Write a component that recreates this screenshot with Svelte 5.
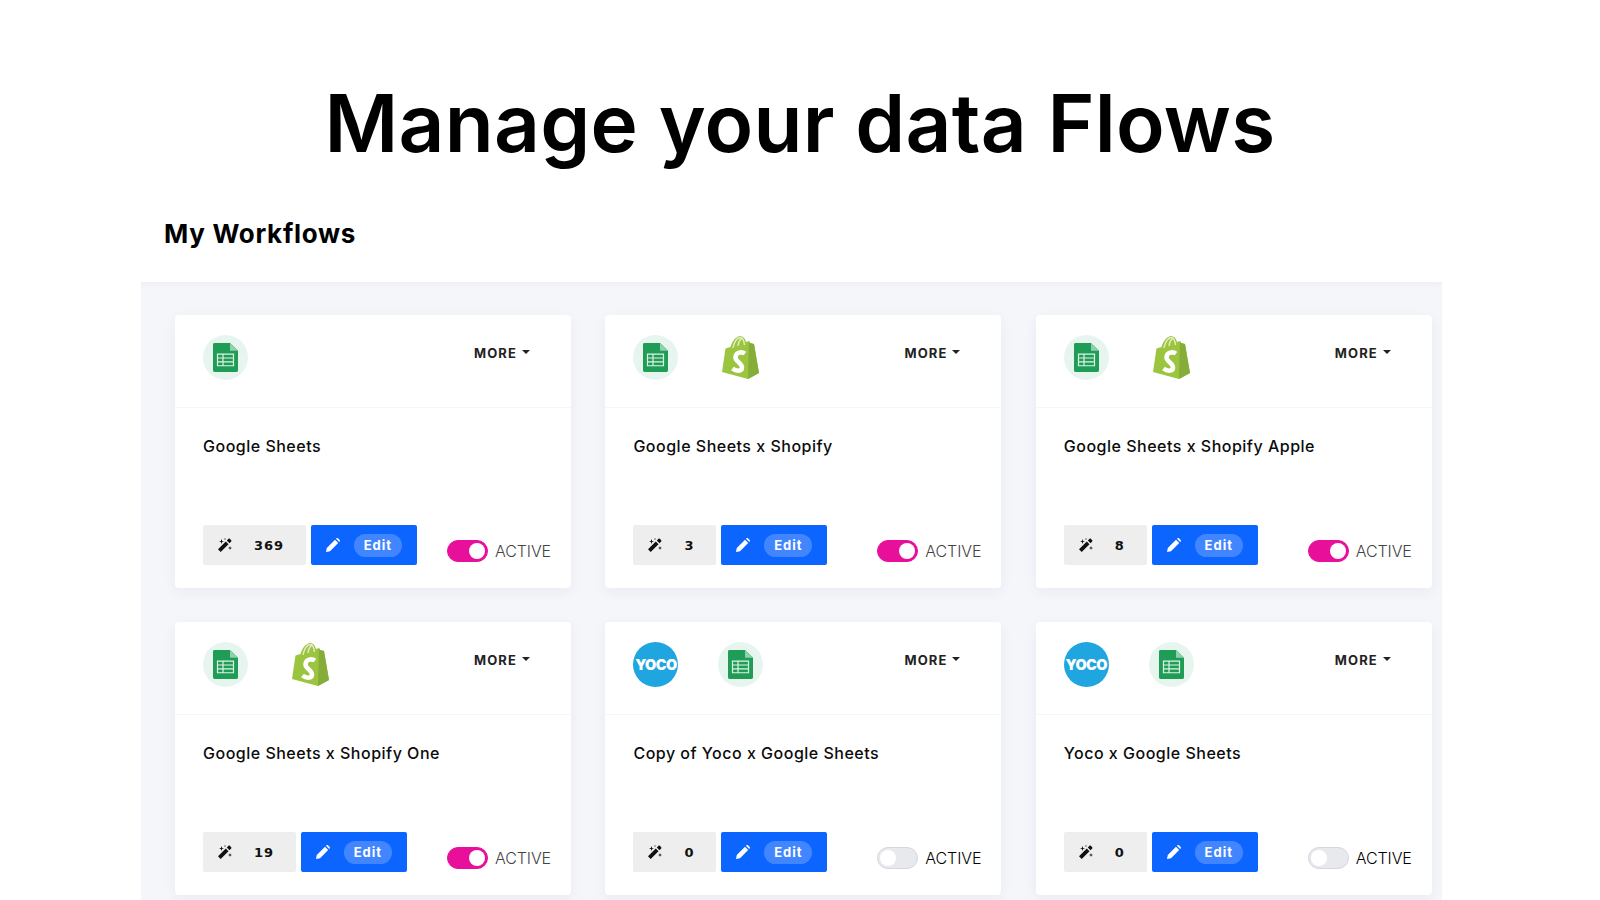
<script>
  // Workflow cards shown on the page
  const flows = [
    { name: 'Google Sheets', icons: ['sheets'], runs: 369, active: true },
    { name: 'Google Sheets x Shopify', icons: ['sheets', 'shopify'], runs: 3, active: true },
    { name: 'Google Sheets x Shopify Apple', icons: ['sheets', 'shopify'], runs: 8, active: true },
    { name: 'Google Sheets x Shopify One', icons: ['sheets', 'shopify'], runs: 19, active: true },
    { name: 'Copy of Yoco x Google Sheets', icons: ['yoco', 'sheets'], runs: 0, active: false },
    { name: 'Yoco x Google Sheets', icons: ['yoco', 'sheets'], runs: 0, active: false }
  ];
</script>

<main class="page">
  <h1 class="headline">Manage your data Flows</h1>
  <h2 class="section-title">My Workflows</h2>

  <section class="panel">
    {#each flows as flow}
      <article class="card">
        <header class="card-head">
          <div class="apps">
            {#each flow.icons as icon}
              {#if icon === 'sheets'}
                <span class="app sheets">
                  <svg width="25" height="29" viewBox="0 0 25 30" preserveAspectRatio="none">
                    <path d="M1.500 0H17L25 8V28.500A1.500 1.500 0 0 1 23.500 30H1.500A1.500 1.500 0 0 1 0 28.500V1.500A1.500 1.500 0 0 1 1.500 0Z" fill="#1f9d57" />
                    <path d="M17 0L25 8H17Z" fill="#8fd0ae" />
                    <path d="M4.500 11.500H20.500V23.500H4.500ZM4.500 15.500H20.500M4.500 19.500H20.500M10 11.500V23.500" fill="none" stroke="#dff2e7" stroke-width="1.200" />
                  </svg>
                </span>
              {:else if icon === 'shopify'}
                <span class="app">
                  <svg width="37" height="44" viewBox="0 1 37 44">
                    <path d="M27 6L24 7C23 3 21 1 18 1C13 2 10 7 8.500 12L3.500 13.500L0 37L26 44L37 38L32 9L28 8Z" fill="#9bc43f" />
                    <path d="M27 6L28 8L32 9L37 38L26 44Z" fill="#86ad3a" />
                    <path d="M11 13C12 7 15 2.500 18.500 2.500C21.500 2.500 22 7 22.500 10M16 11C16.500 7 18 4 20.500 3" fill="none" stroke="#fff" stroke-opacity="0.7" stroke-width="1.400" />
                    <path d="M23 18.500C20 16.500 13.500 17 13.500 22.500C13.500 27 20 27.500 20 32.500C20 36.500 14.500 36.500 10.500 33.500" fill="none" stroke="#fff" stroke-width="4.500" />
                  </svg>
                </span>
              {:else}
                <span class="app yoco">YOCO</span>
              {/if}
            {/each}
          </div>
          <span class="more">MORE<i class="caret"></i></span>
        </header>

        <div class="card-body">{flow.name}</div>

        <footer class="card-foot">
          <div class="count">
            <svg width="14" height="14" viewBox="0 0 14 14">
              <path d="M0 11.300L7.800 3.500L10.500 6.200L2.700 14Z M8.800 2.500L10.500 0.800C10.900 0.400 11.400 0.400 11.800 0.800L13.200 2.200C13.600 2.600 13.600 3.100 13.200 3.500L11.500 5.200Z" fill="#111" />
              <path d="M3.500 1L4.100 2.900L6 3.500L4.100 4.100L3.500 6L2.900 4.100L1 3.500L2.900 2.900ZM12 8L12.500 9.500L14 10L12.500 10.500L12 12L11.500 10.500L10 10L11.500 9.500ZM7 0L7.300 0.700L8 1L7.300 1.300L7 2L6.700 1.300L6 1L6.700 0.700Z" fill="#111" />
            </svg>
            <span class="runs">{flow.runs}</span>
          </div>
          <button type="button" class="edit">
            <svg width="14" height="14" viewBox="0 0 14 14">
              <path d="M0 14L0.800 10L9 1.800L12.200 5L4 13.200ZM10 0.800L10.600 0.300C11 0 11.500 0 11.900 0.300L13.700 2.100C14 2.500 14 3 13.700 3.400L13.200 4Z" fill="#fff" />
            </svg>
            <span class="edit-label">Edit</span>
          </button>
          <div class="status" class:on={flow.active}>
            <span class="toggle"><span class="knob"></span></span>
            <span class="status-label">ACTIVE</span>
          </div>
        </footer>
      </article>
    {/each}
  </section>
</main>

<style>
  :global(body) {
    background: #fff;
    overflow: hidden;
  }

  .page {
    height: 900px;
    overflow: hidden;
    font-family: Inter, "Liberation Sans", sans-serif;
    color: #000;
  }

  .headline {
    margin: 0;
    padding-top: 76px;
    height: 134px;
    font-size: 80px;
    line-height: 94px;
    font-weight: 600;
    letter-spacing: 0.3px;
    text-align: center;
  }

  .section-title {
    margin: 0;
    padding: 7px 0 0 164px;
    height: 65px;
    font-size: 26px;
    line-height: 34px;
    font-weight: 700;
    letter-spacing: 0.7px;
  }

  .panel {
    box-sizing: border-box;
    width: 1301px;
    height: 651px;
    margin-left: 141px;
    padding: 33px 0 0 34px;
    background: #f5f6fa;
    box-shadow: inset 0 6px 6px -4px #eeeff2;
    display: grid;
    grid-template-columns: repeat(3, 396px);
    column-gap: 34.4px;
    row-gap: 34px;
    align-content: start;
  }

  .card {
    height: 273px;
    background: #fff;
    border-radius: 4px;
    box-shadow: 0 4px 14px rgba(30, 40, 80, 0.05);
    display: flex;
    flex-direction: column;
  }

  .card-head {
    box-sizing: border-box;
    height: 93px;
    padding: 20px 41px 0 28px;
    border-bottom: 1px solid #f6f6f6;
    display: flex;
    justify-content: space-between;
    align-items: flex-start;
  }

  .apps {
    display: flex;
    gap: 40px;
  }

  .app {
    width: 45px;
    height: 45px;
    display: flex;
    align-items: center;
    justify-content: center;
    border-radius: 50%;
    flex: none;
  }

  .sheets {
    background: #e7f5ef;
  }

  .yoco {
    background: #1fa6e0;
    color: #fff;
    font-size: 14.5px;
    font-weight: 900;
    letter-spacing: -0.6px;
  }

  .more {
    margin-top: 9px;
    font-size: 13px;
    line-height: 18px;
    font-weight: 700;
    letter-spacing: 1.1px;
    color: #222;
    display: flex;
    align-items: center;
  }

  .caret {
    margin-left: 5px;
    margin-top: -3px;
    border-top: 4px solid #222;
    border-left: 4px solid transparent;
    border-right: 4px solid transparent;
  }

  .card-body {
    flex: 1;
    padding: 27px 28px 0;
    font-size: 16px;
    line-height: 22px;
    font-weight: 500;
    letter-spacing: 0.5px;
    color: #0b0b0b;
  }

  .card-foot {
    padding: 0 20px 23px 28px;
    display: flex;
    align-items: flex-end;
  }

  .count {
    height: 40px;
    padding: 0 22px 0 15px;
    background: #eeeeee;
    display: flex;
    align-items: center;
    gap: 22px;
    border-radius: 2px;
  }

  .runs {
    min-width: 10px;
    font-family: "DejaVu Sans", sans-serif;
    font-size: 13px;
    font-weight: 700;
    letter-spacing: 0.9px;
    color: #111;
  }

  .edit {
    margin-left: 5px;
    width: 106px;
    height: 40px;
    padding: 0 15px;
    border: 0;
    border-radius: 2px;
    background: #0d65ff;
    display: flex;
    align-items: center;
    gap: 14px;
  }

  .edit-label {
    width: 48px;
    height: 23px;
    border-radius: 12px;
    background: rgba(255, 255, 255, 0.22);
    color: #fff;
    font-family: Inter, sans-serif;
    font-size: 13px;
    line-height: 23px;
    font-weight: 700;
    letter-spacing: 1px;
    text-align: center;
  }

  .status {
    margin-left: auto;
    padding-bottom: 3px;
    display: flex;
    align-items: center;
    gap: 7px;
  }

  .toggle {
    width: 41px;
    height: 22px;
    box-sizing: border-box;
    padding: 2px;
    border-radius: 11px;
    background: #e7e9ec;
    border: 1px solid #d4d7de;
    display: flex;
  }

  .knob {
    width: 16px;
    height: 16px;
    border-radius: 50%;
    background: #fff;
  }

  .on .toggle {
    background: #e80f9a;
    border-color: #e80f9a;
    justify-content: flex-end;
  }

  .status-label {
    font-size: 16px;
    line-height: 22px;
    font-weight: 300;
    letter-spacing: -0.1px;
    color: #000;
  }

  .on .status-label {
    color: #444;
  }
</style>
